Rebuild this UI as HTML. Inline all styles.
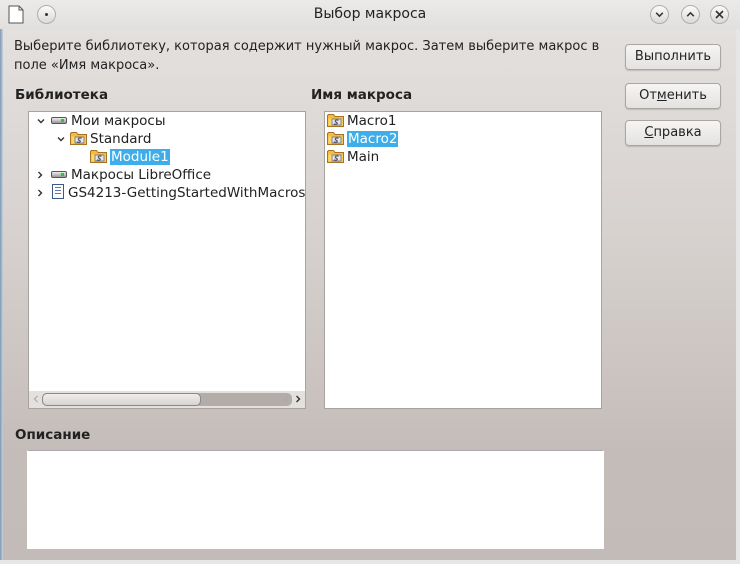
<!DOCTYPE html>
<html><head><meta charset="utf-8"><style>
*{box-sizing:border-box;margin:0;padding:0}
body{width:740px;height:564px;overflow:hidden;font-family:"DejaVu Sans","Liberation Sans",sans-serif;font-size:13px;color:#222;position:relative;background:#e6e4e2}
.title{position:absolute;left:0;top:0;width:740px;height:29px;background:linear-gradient(#eceae8,#e2e0de);}
.title .t{position:absolute;left:0;width:740px;top:6px;text-align:center;font-size:14px}
.main{position:absolute;left:3px;top:29px;width:733px;height:531px;background:linear-gradient(#e3e0de 0%,#d6d1ce 40%,#c4bcb9 80%,#c3bbb8 100%)}
.lb{position:absolute;left:0;top:29px;width:3px;height:535px;background:linear-gradient(90deg,#7d97b0,#c9d2da)}
.a{position:absolute}
.btn{position:absolute;left:625px;width:96px;height:26px;border:1px solid #aaa6a2;border-radius:4px;background:linear-gradient(#f6f5f4,#e4e2e0);text-align:center;line-height:24px;font-size:13px;box-shadow:0 1px 1px rgba(0,0,0,.15)}
.box{position:absolute;background:#fff;border:1px solid #a9a39f}
.row{position:absolute;height:18px;line-height:18px;white-space:nowrap;font-size:13.5px}
.sel{background:#3daee9;color:#fff;padding:0 1px}
.ic{display:inline-block;vertical-align:-2px;margin-right:3px}
.drv{display:inline-block;width:16px;height:7px;vertical-align:1px;margin-right:4px;background:linear-gradient(#eee,#999);border:1px solid #555;border-radius:2px;position:relative}
.drv:after{content:"";position:absolute;right:2px;top:1px;width:3px;height:3px;background:#2c2}
.doc{display:inline-block;width:12px;height:15px;vertical-align:-2px;margin-right:4px;border:1px solid #3a5a8a;background:repeating-linear-gradient(#fff 0 2px,#5a7ab0 2px 3px);background-clip:content-box;padding:2px}
.chev{position:absolute}
.wb{position:absolute;top:5px;width:19px;height:19px;border-radius:50%;border:1px solid #b0adaa;background:linear-gradient(#fafafa,#dcdad8)}
</style></head><body>
<svg width="0" height="0" style="position:absolute"><defs>
<symbol id="f" viewBox="0 0 17 14"><path d="M0.5 2.5V13.5H16.5V3.5H8L6.5 1.5H1.5Z" fill="#f3bd3f" stroke="#a8721e"/><path d="M1.5 5.5H15.5V12.5H1.5Z" fill="#fbd868"/><rect x="5" y="6" width="9" height="6" fill="#e6e6ea" stroke="#6a6a80" stroke-width=".8"/><path d="M11.5 7.3C10 6.6 7.5 7 8.5 8.6C9.5 10 11.5 9.8 9.5 11.2C8.5 11.6 7.5 11.2 6.8 10.8" fill="none" stroke="#556" stroke-width="1.2"/></symbol>
<symbol id="cd" viewBox="0 0 10 10"><path d="M2 3.5L5 6.5L8 3.5" fill="none" stroke="#333" stroke-width="1.4"/></symbol>
<symbol id="cr" viewBox="0 0 10 10"><path d="M3.5 2L6.5 5L3.5 8" fill="none" stroke="#333" stroke-width="1.4"/></symbol>
</defs></svg>
<div class="title">
 <svg class="a" style="left:8px;top:5px" width="16" height="19"><path d="M1 1H11L15 5V18H1Z" fill="#fff" stroke="#555"/><path d="M11 1V5H15" fill="none" stroke="#555"/></svg>
 <div class="wb" style="left:37px"><div class="a" style="left:7px;top:7px;width:3px;height:3px;background:#333;border-radius:50%"></div></div>
 <div class="t">Выбор макроса</div>
 <div class="wb" style="left:650px"><svg class="a" style="left:3px;top:3px" width="11" height="11"><use href="#cd"/></svg></div>
 <div class="wb" style="left:681px"><svg class="a" style="left:3px;top:3px;transform:rotate(180deg)" width="11" height="11"><use href="#cd"/></svg></div>
 <div class="wb" style="left:710px"><svg class="a" style="left:3px;top:3px" width="11" height="11"><path d="M2 2L9 9M9 2L2 9" stroke="#333" stroke-width="1.6"/></svg></div>
</div>
<div class="main"></div>
<div class="lb"></div>
<div class="a" style="left:14px;top:37px;font-size:13px;line-height:19px;width:610px">Выберите библиотеку, которая содержит нужный макрос. Затем выберите макрос в поле «Имя макроса».</div>
<div class="btn" style="top:44px">Выполнить</div>
<div class="btn" style="top:83px">От<u>м</u>енить</div>
<div class="btn" style="top:120px"><u>С</u>правка</div>
<div class="a" style="left:15px;top:87px;font-weight:bold;font-size:13.5px">Библиотека</div>
<div class="a" style="left:311px;top:87px;font-weight:bold;font-size:13.5px">Имя макроса</div>
<div class="box" style="left:28px;top:111px;width:278px;height:298px">
 <svg class="chev" style="left:7px;top:4px" width="10" height="10"><use href="#cd"/></svg>
 <div class="row" style="left:22px;top:0"><span class="drv"></span>Мои макросы</div>
 <svg class="chev" style="left:27px;top:22px" width="10" height="10"><use href="#cd"/></svg>
 <div class="row" style="left:41px;top:18px"><svg class="ic" width="17" height="14"><use href="#f"/></svg>Standard</div>
 <div class="row" style="left:61px;top:36px"><svg class="ic" width="17" height="14"><use href="#f"/></svg><span class="sel">Module1</span></div>
 <svg class="chev" style="left:6px;top:58px" width="10" height="10"><use href="#cr"/></svg>
 <div class="row" style="left:22px;top:54px"><span class="drv"></span>Макросы LibreOffice</div>
 <svg class="chev" style="left:6px;top:76px" width="10" height="10"><use href="#cr"/></svg>
 <div class="row" style="left:23px;top:72px"><span class="doc"></span>GS4213-GettingStartedWithMacros</div>
 <div class="a" style="left:0;top:279px;width:276px;height:17px;background:#e4e0de"></div>
 <div class="a" style="left:13px;top:281px;width:250px;height:13px;border-radius:5px;background:#b3aca9"></div>
 <div class="a" style="left:13px;top:281px;width:159px;height:13px;border-radius:5px;background:linear-gradient(#f0eeed,#d6d3d1);border:1px solid #888"></div>
 <svg class="chev" style="left:2px;top:282px;transform:rotate(180deg)" width="10" height="10"><path d="M3.5 2L6.5 5L3.5 8" fill="none" stroke="#aaa" stroke-width="1.2"/></svg>
 <svg class="chev" style="left:252px;top:282px;transform:rotate(180deg)" width="10" height="10"><path d="M3.5 2L6.5 5L3.5 8" fill="none" stroke="#aaa" stroke-width="1.2"/></svg>
 <svg class="chev" style="left:264px;top:282px" width="10" height="10"><use href="#cr"/></svg>
</div>
<div class="box" style="left:324px;top:111px;width:278px;height:298px">
 <div class="row" style="left:2px;top:0"><svg class="ic" width="17" height="14"><use href="#f"/></svg>Macro1</div>
 <div class="row" style="left:2px;top:18px"><svg class="ic" width="17" height="14"><use href="#f"/></svg><span class="sel">Macro2</span></div>
 <div class="row" style="left:2px;top:36px"><svg class="ic" width="17" height="14"><use href="#f"/></svg>Main</div>
</div>
<div class="a" style="left:15px;top:427px;font-weight:bold;font-size:13.5px">Описание</div>
<div class="box" style="left:27px;top:450px;width:577px;height:99px;border-color:#aaa #fff #fff #fff"></div>
<div class="a" style="left:0;top:560px;width:740px;height:4px;background:#e8e6e4"></div>
<div class="a" style="left:736px;top:29px;width:4px;height:535px;background:#e8e6e4"></div>
</body></html>
